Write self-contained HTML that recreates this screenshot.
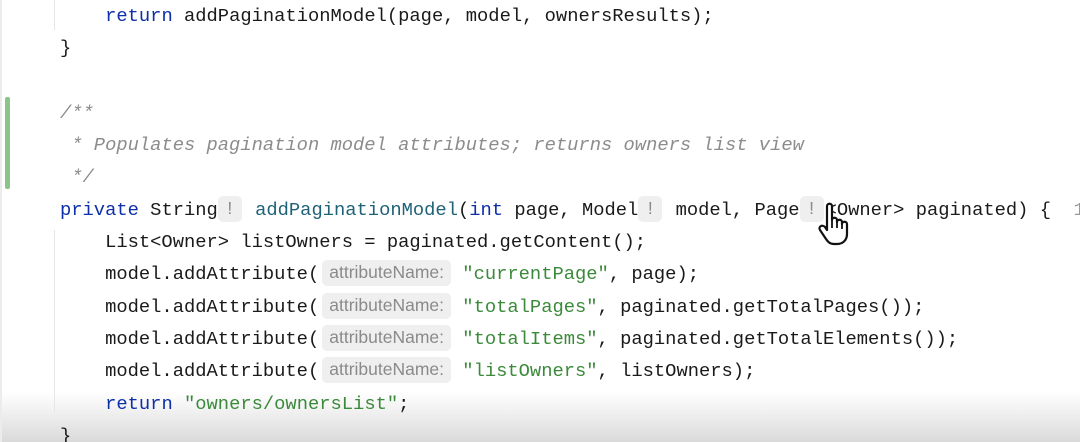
<!DOCTYPE html>
<html><head><meta charset="utf-8"><style>
html,body{margin:0;padding:0;width:1080px;height:442px;overflow:hidden;background:#fff;}
.wrap{position:relative;width:1080px;height:442px;background:#fff;overflow:hidden;}
.code{position:absolute;left:60px;top:0;font-family:"Liberation Mono",monospace;font-size:18.8px;color:#1a1a1a;}
.l{height:32.3px;line-height:32.3px;white-space:pre;}
.k{color:#0d2fa8;}
.s{color:#3b8a3b;}
.c{color:#8c8c8c;font-style:italic;}
.f{color:#1f6277;}
.h{display:inline-block;background:#efefef;border-radius:5px;color:#8a8a8a;font-family:"Liberation Sans",sans-serif;font-style:normal;font-size:17.5px;line-height:25px;height:26px;vertical-align:1px;padding:0 7px;margin:0 0 0 3px;}
.b{width:12px;text-align:center;padding:0 6px;margin:0 2px 0 0;}
.shade{position:absolute;left:0;right:0;bottom:0;height:50px;background:linear-gradient(to bottom,rgba(220,220,220,0),rgba(218,218,218,1));}
</style></head><body><div class="wrap">
<div class="shade"></div>
<div style="position:absolute;left:0;top:0;width:2px;height:442px;background:#ececec"></div>
<div style="position:absolute;left:54px;top:0;width:1px;height:30px;background:#e6e6e6"></div>
<div style="position:absolute;left:54px;top:230px;width:1px;height:182px;background:#e6e6e6"></div>
<div style="position:absolute;left:5px;top:97px;width:5px;height:92px;background:#8cc58a;border-radius:2px"></div>
<div class="code"><div class="l">    <span class="k">return</span> addPaginationModel(page, model, ownersResults);</div><div class="l">}</div><div class="l"> </div><div class="l"><span class="c">/**</span></div><div class="l"><span class="c"> * Populates pagination model attributes; returns owners list view</span></div><div class="l"><span class="c"> */</span></div><div class="l"><span class="k">private</span> String<span class="h b">!</span> <span class="f">addPaginationModel</span>(<span class="k">int</span> page, Model<span class="h b">!</span> model, Page<span class="h b">!</span>&lt;Owner&gt; paginated) {  <span style="color:#999">1</span></div><div class="l">    List&lt;Owner&gt; listOwners = paginated.getContent();</div><div class="l">    model.addAttribute(<span class="h">attributeName:</span> <span class="s">"currentPage"</span>, page);</div><div class="l">    model.addAttribute(<span class="h">attributeName:</span> <span class="s">"totalPages"</span>, paginated.getTotalPages());</div><div class="l">    model.addAttribute(<span class="h">attributeName:</span> <span class="s">"totalItems"</span>, paginated.getTotalElements());</div><div class="l">    model.addAttribute(<span class="h">attributeName:</span> <span class="s">"listOwners"</span>, listOwners);</div><div class="l">    <span class="k">return</span> <span class="s">"owners/ownersList"</span>;</div><div class="l">}</div></div>
<svg style="position:absolute;left:818px;top:202px" width="36" height="44" viewBox="0 0 36 44">
<path d="M9 4 C9 1 14 1 14 4 L14 18 C14 15 19 15 19 18 L19 20 C19 17 24 17 24 20 L24 22 C24 19 29 19 29 22 L29 32 C29 38 25 42 19 42 L16 42 C12 42 10 40 8 37 L2 28 C0 25 4 22 7 25 L9 28 Z" fill="#fff" stroke="#111" stroke-width="2.2" stroke-linejoin="round"/>
<path d="M14 18 L14 26 M19 20 L19 26 M24 22 L24 27" stroke="#111" stroke-width="1.8"/>
</svg>
</div></body></html>
